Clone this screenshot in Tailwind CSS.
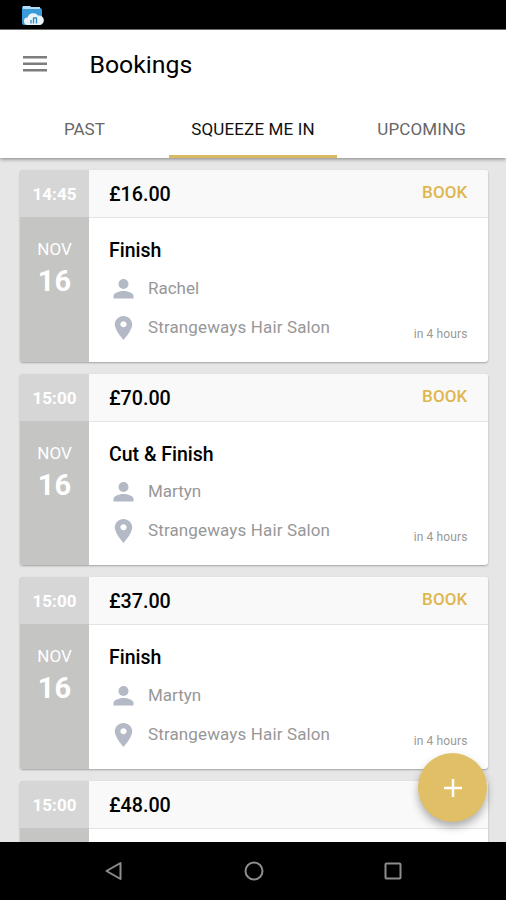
<!DOCTYPE html>
<html lang="en">
  <head>
    <meta charset="UTF-8" />
    <meta name="viewport" content="width=device-width, initial-scale=1.0" />
    <script src="https://cdn.jsdelivr.net/npm/@tailwindcss/browser@4"></script>
    <title>Bookings</title>
  </head>
  <body class="font-[Roboto,sans-serif] bg-black">
    <!-- icons shared by the cards -->
    <svg class="hidden">
      <symbol id="person" viewBox="0 0 28 28">
        <circle cx="13.500" cy="9" r="5" />
        <path d="M3.500 23.500v-2.500c0-3.300 6.600-5 10-5s10 1.700 10 5v2.500z" />
      </symbol>
      <symbol id="place" viewBox="0 0 28 28">
        <path d="M12 2C8.130 2 5 5.130 5 9c0 5.250 7 13 7 13s7-7.750 7-13c0-3.870-3.130-7-7-7zm0 9.500c-1.380 0-2.500-1.120-2.500-2.500s1.120-2.500 2.500-2.500 2.500 1.120 2.500 2.500-1.120 2.500-2.500 2.500z" transform="translate(-1.500 -.5) scale(1.250 1.200)" />
      </symbol>
    </svg>

    <div class="relative flex h-[900px] w-[506px] flex-col overflow-hidden">
      <!-- status bar -->
      <div class="h-[30px] shrink-0 border-b border-[#777] bg-black pt-[5px] pl-[21px]">
        <svg class="h-[21px] w-[23px]" viewBox="0 0 23 21">
          <path d="M2 1h7l2 2h8q2 0 2 2v13q0 2-2 2H3q-2 0-2-2V3q0-2 1-2z" fill="#3b9ad9" />
          <path d="M2 1h7l1 1h9v2H2z" fill="#b5dcf3" />
          <path d="M7 20a3.700 3.700 0 0 1-.5-7.500 6 6 0 0 1 10.500-2A4.800 4.800 0 0 1 19 20z" fill="#e9f3fa" />
          <path d="M10 18.500v-3.500M12.500 18.500v-6M15.500 18.500v-6M12.500 13h3" fill="none" stroke="#3487c4" stroke-width="1.300" />
        </svg>
      </div>

      <!-- app bar -->
      <header class="relative z-10 h-[128px] shrink-0 bg-white shadow-[0_1px_4px_rgba(0,0,0,0.45)]">
        <div class="flex h-[71px] items-center pl-[23px]">
          <svg class="-mt-[3px] h-[18px] w-6" viewBox="0 0 24 18" fill="#7d7d7d">
            <path d="M0 1h24v2.500H0zM0 7.500h24V10H0zM0 14h24v2.500H0z" />
          </svg>
          <h1 class="ml-[42.500px] text-[24.800px] leading-none">Bookings</h1>
        </div>
        <nav class="grid h-[57px] grid-cols-3 text-center text-[17px] leading-[57px] text-[#666]">
          <a>PAST</a>
          <a class="h-[57px] border-b-[3px] border-[#d9b964] tracking-[0.15px] text-[#111]">SQUEEZE ME IN</a>
          <a class="tracking-[0.15px]">UPCOMING</a>
        </nav>
      </header>

      <!-- bookings -->
      <main class="flex h-[684px] shrink-0 flex-col gap-3 overflow-hidden bg-[#e6e6e6] pt-3 pr-[18.500px] pl-5">
        <article class="flex h-[191.500px] shrink-0 overflow-hidden rounded-[3px] bg-white shadow-[0_1px_2px_rgba(0,0,0,0.3)]">
          <div class="w-[69px] bg-[#c5c5c3] text-center text-white">
            <div class="h-[47px] bg-[#d6d6d6] text-[17px] leading-[49px] font-bold">14:45</div>
            <div class="mt-[22px] text-[17px] leading-5">NOV</div>
            <div class="mt-1.5 text-[29px] leading-8 font-bold">16</div>
          </div>
          <div class="flex-1">
            <div class="flex h-12 justify-between border-b border-[#e4e4e4] bg-[#f9f9f9] px-5 font-medium">
              <span class="text-[19.700px] leading-[49px]">£16.00</span>
              <span class="text-[17px] leading-[45px] tracking-[0.15px] text-[#dfb64e]">BOOK</span>
            </div>
            <div class="pt-[21px] pr-5 pl-5">
              <h2 class="text-[19.500px] leading-6 font-medium">Finish</h2>
              <div class="mt-3 flex h-[27px] items-center text-[17px] text-[#979797]">
                <svg class="mr-[10px] ml-px size-7 fill-[#b3b9c5]"><use href="#person" /></svg>Rachel
              </div>
              <div class="mt-3 flex h-[27px] items-center text-[17px] tracking-[0.13px] text-[#979797]">
                <svg class="mr-[10px] ml-px size-7 fill-[#b3b9c5]"><use href="#place" /></svg>Strangeways Hair Salon
                <span class="ml-auto pt-3 text-[12px] text-[#999]">in 4 hours</span>
              </div>
            </div>
          </div>
        </article>

        <article class="flex h-[191.500px] shrink-0 overflow-hidden rounded-[3px] bg-white shadow-[0_1px_2px_rgba(0,0,0,0.3)]">
          <div class="w-[69px] bg-[#c5c5c3] text-center text-white">
            <div class="h-[47px] bg-[#d6d6d6] text-[17px] leading-[49px] font-bold">15:00</div>
            <div class="mt-[22px] text-[17px] leading-5">NOV</div>
            <div class="mt-1.5 text-[29px] leading-8 font-bold">16</div>
          </div>
          <div class="flex-1">
            <div class="flex h-12 justify-between border-b border-[#e4e4e4] bg-[#f9f9f9] px-5 font-medium">
              <span class="text-[19.700px] leading-[49px]">£70.00</span>
              <span class="text-[17px] leading-[45px] tracking-[0.15px] text-[#dfb64e]">BOOK</span>
            </div>
            <div class="pt-[21px] pr-5 pl-5">
              <h2 class="text-[19.500px] leading-6 font-medium">Cut &amp; Finish</h2>
              <div class="mt-3 flex h-[27px] items-center text-[17px] text-[#979797]">
                <svg class="mr-[10px] ml-px size-7 fill-[#b3b9c5]"><use href="#person" /></svg>Martyn
              </div>
              <div class="mt-3 flex h-[27px] items-center text-[17px] tracking-[0.13px] text-[#979797]">
                <svg class="mr-[10px] ml-px size-7 fill-[#b3b9c5]"><use href="#place" /></svg>Strangeways Hair Salon
                <span class="ml-auto pt-3 text-[12px] text-[#999]">in 4 hours</span>
              </div>
            </div>
          </div>
        </article>

        <article class="flex h-[191.500px] shrink-0 overflow-hidden rounded-[3px] bg-white shadow-[0_1px_2px_rgba(0,0,0,0.3)]">
          <div class="w-[69px] bg-[#c5c5c3] text-center text-white">
            <div class="h-[47px] bg-[#d6d6d6] text-[17px] leading-[49px] font-bold">15:00</div>
            <div class="mt-[22px] text-[17px] leading-5">NOV</div>
            <div class="mt-1.5 text-[29px] leading-8 font-bold">16</div>
          </div>
          <div class="flex-1">
            <div class="flex h-12 justify-between border-b border-[#e4e4e4] bg-[#f9f9f9] px-5 font-medium">
              <span class="text-[19.700px] leading-[49px]">£37.00</span>
              <span class="text-[17px] leading-[45px] tracking-[0.15px] text-[#dfb64e]">BOOK</span>
            </div>
            <div class="pt-[21px] pr-5 pl-5">
              <h2 class="text-[19.500px] leading-6 font-medium">Finish</h2>
              <div class="mt-3 flex h-[27px] items-center text-[17px] text-[#979797]">
                <svg class="mr-[10px] ml-px size-7 fill-[#b3b9c5]"><use href="#person" /></svg>Martyn
              </div>
              <div class="mt-3 flex h-[27px] items-center text-[17px] tracking-[0.13px] text-[#979797]">
                <svg class="mr-[10px] ml-px size-7 fill-[#b3b9c5]"><use href="#place" /></svg>Strangeways Hair Salon
                <span class="ml-auto pt-3 text-[12px] text-[#999]">in 4 hours</span>
              </div>
            </div>
          </div>
        </article>

        <article class="flex h-[191.500px] shrink-0 overflow-hidden rounded-[3px] bg-white shadow-[0_1px_2px_rgba(0,0,0,0.3)]">
          <div class="w-[69px] bg-[#c5c5c3] text-center text-white">
            <div class="h-[47px] bg-[#d6d6d6] text-[17px] leading-[49px] font-bold">15:00</div>
          </div>
          <div class="flex-1">
            <div class="h-12 border-b border-[#e4e4e4] bg-[#f9f9f9] px-5 font-medium">
              <span class="text-[19.700px] leading-[49px]">£48.00</span>
            </div>
          </div>
        </article>
      </main>

      <!-- add button -->
      <button class="absolute top-[753px] left-[418px] flex size-[69px] items-center justify-center rounded-full bg-[#e0bf66] shadow-[0_5px_9px_rgba(0,0,0,0.3)]">
        <svg class="size-[18px]" viewBox="0 0 18 18" stroke="#fff" stroke-width="2.500"><path d="M9 0v18M0 9h18" /></svg>
      </button>

      <!-- navigation bar -->
      <footer class="flex h-[58px] shrink-0 items-center justify-between bg-black pr-[103px] pl-[104px]">
        <svg class="size-5" viewBox="0 0 20 20" fill="none" stroke="#8d8d8d" stroke-width="2"><path d="M16.500 2v16L2.500 10z" stroke-linejoin="round" /></svg>
        <svg class="size-5" viewBox="0 0 20 20" fill="none" stroke="#8d8d8d" stroke-width="2"><circle cx="10" cy="10" r="8.500" /></svg>
        <svg class="size-5" viewBox="0 0 20 20" fill="none" stroke="#8d8d8d" stroke-width="2"><rect x="2.500" y="2.500" width="15" height="15" rx="1" /></svg>
      </footer>
    </div>
  </body>
</html>
